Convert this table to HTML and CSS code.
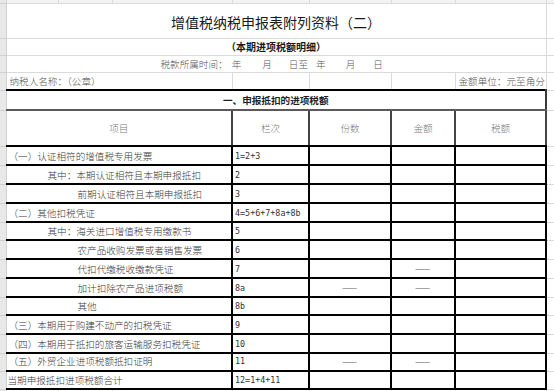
FILE: index.html
```html
<!DOCTYPE html>
<html lang="zh-CN">
<head>
<meta charset="utf-8">
<title>增值税纳税申报表附列资料（二）</title>
<link rel="stylesheet" href="styles.css">
</head>
<body>
<table class="sheet">
  <colgroup>
    <col class="w0"><col class="w1"><col class="w2"><col class="w3"><col class="w4"><col class="w5"><col class="w6"><col class="w7"><col class="w8">
  </colgroup>
  <tr class="r0"><td class="rh"></td><td></td><td></td><td></td><td></td><td></td><td></td><td></td><td class="sp"></td></tr>
  <tr class="r1"><td class="rh"></td><td colspan="7" class="title">增值税纳税申报表附列资料（二）</td><td class="sp"></td></tr>
  <tr class="r2"><td class="rh"></td><td colspan="7" class="subtitle">（本期进项税额明细）</td><td class="sp"></td></tr>
  <tr class="r3"><td class="rh"></td><td colspan="7" class="period"><span class="p0">税款所属时间：</span><span class="p1">年</span><span class="p2">月</span><span class="p3">日至</span><span class="p4">年</span><span class="p5">月</span><span class="p6">日</span></td><td class="sp"></td></tr>
  <tr class="r4"><td class="rh"></td><td colspan="3" class="meta">纳税人名称：（公章）</td><td></td><td></td><td></td><td class="meta unit">金额单位：元至角分</td><td class="sp"></td></tr>
  <tr class="r5"><td class="rh"></td><td colspan="7" class="section">一、申报抵扣的进项税额</td><td class="sp"></td></tr>
  <tr class="r6"><td class="rh"></td><td colspan="3" class="hcell first">项目</td><td class="hcell">栏次</td><td class="hcell">份数</td><td class="hcell">金额</td><td class="hcell last">税额</td><td class="sp"></td></tr>
  <tr class="d h19"><td class="rh"></td><td colspan="3" class="f item">（一）认证相符的增值税专用发票</td><td class="f code">1=2+3</td><td class="f"></td><td class="f"></td><td class="f"></td><td class="sp"></td></tr>
  <tr class="d h19"><td class="rh"></td><td colspan="3" class="f item in1">其中：本期认证相符且本期申报抵扣</td><td class="f code">2</td><td class="f"></td><td class="f"></td><td class="f"></td><td class="sp"></td></tr>
  <tr class="d h19"><td class="rh"></td><td colspan="3" class="f item in2">前期认证相符且本期申报抵扣</td><td class="f code">3</td><td class="f"></td><td class="f"></td><td class="f"></td><td class="sp"></td></tr>
  <tr class="d h19"><td class="rh"></td><td colspan="3" class="f item">（二）其他扣税凭证</td><td class="f code">4=5+6+7+8a+8b</td><td class="f"></td><td class="f"></td><td class="f"></td><td class="sp"></td></tr>
  <tr class="d h18"><td class="rh"></td><td colspan="3" class="f item in1">其中：海关进口增值税专用缴款书</td><td class="f code">5</td><td class="f"></td><td class="f"></td><td class="f"></td><td class="sp"></td></tr>
  <tr class="d h19"><td class="rh"></td><td colspan="3" class="f item in2">农产品收购发票或者销售发票</td><td class="f code">6</td><td class="f"></td><td class="f"></td><td class="f"></td><td class="sp"></td></tr>
  <tr class="d h19"><td class="rh"></td><td colspan="3" class="f item in2">代扣代缴税收缴款凭证</td><td class="f code">7</td><td class="f"></td><td class="f dash">——</td><td class="f"></td><td class="sp"></td></tr>
  <tr class="d h19"><td class="rh"></td><td colspan="3" class="f item in2">加计扣除农产品进项税额</td><td class="f code">8a</td><td class="f dash">——</td><td class="f dash">——</td><td class="f"></td><td class="sp"></td></tr>
  <tr class="d h18"><td class="rh"></td><td colspan="3" class="f item in2">其他</td><td class="f code">8b</td><td class="f"></td><td class="f"></td><td class="f"></td><td class="sp"></td></tr>
  <tr class="d h19"><td class="rh"></td><td colspan="3" class="f item">（三）本期用于购建不动产的扣税凭证</td><td class="f code">9</td><td class="f"></td><td class="f"></td><td class="f"></td><td class="sp"></td></tr>
  <tr class="d h19"><td class="rh"></td><td colspan="3" class="f item">（四）本期用于抵扣的旅客运输服务扣税凭证</td><td class="f code">10</td><td class="f"></td><td class="f"></td><td class="f"></td><td class="sp"></td></tr>
  <tr class="d h18"><td class="rh"></td><td colspan="3" class="f item topal">（五）外贸企业进项税额抵扣证明</td><td class="f code topal">11</td><td class="f dash">——</td><td class="f dash">——</td><td class="f"></td><td class="sp"></td></tr>
  <tr class="d h18"><td class="rh"></td><td colspan="3" class="f item total">当期申报抵扣进项税额合计</td><td class="f code">12=1+4+11</td><td class="f"></td><td class="f"></td><td class="f"></td><td class="sp"></td></tr>
  <tr class="rend"><td class="rh"></td><td></td><td></td><td></td><td></td><td></td><td></td><td></td><td class="sp"></td></tr>
</table>
</body>
</html>
```

FILE: styles.css
```css
html, body {
  margin: 0;
  padding: 0;
  background: #ffffff;
}
body {
  width: 554px;
  height: 391px;
  overflow: hidden;
  font-family: "Noto Sans CJK SC", "Noto Sans", sans-serif;
  color: #3a3a3a;
}
.sheet {
  table-layout: fixed;
  border-collapse: collapse;
  width: 554px;
}
.w0 { width: 6px; }
.w1 { width: 52px; }
.w2 { width: 54px; }
.w3 { width: 120px; }
.w4 { width: 77px; }
.w5 { width: 82px; }
.w6 { width: 64px; }
.w7 { width: 91px; }
.w8 { width: 8px; }

.sheet td {
  padding: 0;
  border: 1px solid #dadada;
  font-size: 9.6px;
  line-height: 12px;
  white-space: nowrap;
  overflow: hidden;
  vertical-align: middle;
  font-weight: 300;
}
.sheet td.rh {
  background: #e8e8e8;
  border-left: none;
  border-color: #d0d0d0;
}
.sheet td.sp {
  border-right: none;
}

.r0 { height: 3px; }
.r0 td { border-top: none; background: #f3f3f3; }
.r1 { height: 35px; }
.r2 { height: 17px; }
.r3 { height: 17px; }
.r4 { height: 18px; }
.r5 { height: 20px; }
.r6 { height: 36px; }
.h19 { height: 19px; }
.h18 { height: 18px; }
.rend { height: 2px; }
.rend td { border-bottom: none; }

.sheet td.title {
  text-align: center;
  font-size: 14px;
  line-height: 18px;
  color: #1a1a1a;
  font-weight: 400;
  padding-top: 2px;
}
.sheet td.subtitle {
  text-align: center;
  font-size: 10px;
  font-weight: 700;
  color: #1a1a1a;
}
.sheet td.period {
  padding-left: 154px;
  color: #555;
}
.period span { display: inline-block; }
.p1 { margin-left: 4px; }
.p2 { margin-left: 21px; }
.p3 { margin-left: 17px; }
.p4 { margin-left: 8px; }
.p5 { margin-left: 20px; }
.p6 { margin-left: 18px; }

.sheet td.meta {
  padding-left: 3px;
  color: #555;
}

.sheet td.section {
  text-align: center;
  font-weight: 700;
  color: #1f1f1f;
  border-top: 2px solid #000;
  border-left: 1px solid #bdbdbd;
  border-right: 2px solid #3a3a3a;
  border-bottom: 2px solid #5a5a5a;
}
.sheet td.hcell {
  text-align: center;
  color: #777;
  border-right: 2px solid #444;
  border-left: 2px solid #444;
  border-bottom: 2px solid #000;
}
.sheet td.hcell.first {
  border-left: 1px solid #bdbdbd;
}

.sheet td.f {
  border: 2px solid #000;
}
.sheet td.item {
  padding-left: 2px;
  color: #3a3a3a;
  border-left: 1px solid #bdbdbd;
}
.sheet td.in1 { padding-left: 41px; }
.sheet td.in2 { padding-left: 71px; }
.sheet td.total { padding-left: 1px; }
.sheet td.code {
  padding-left: 2px;
  font-family: "DejaVu Sans Mono", "Liberation Mono", monospace;
  font-size: 8.4px;
  color: #333;
  font-weight: 400;
}
.sheet td.topal {
  vertical-align: top;
  padding-top: 1px;
}
.sheet td.dash {
  text-align: center;
  color: #5f5f5f;
  font-size: 9px;
  font-weight: 400;
  letter-spacing: 1px;
}
```
